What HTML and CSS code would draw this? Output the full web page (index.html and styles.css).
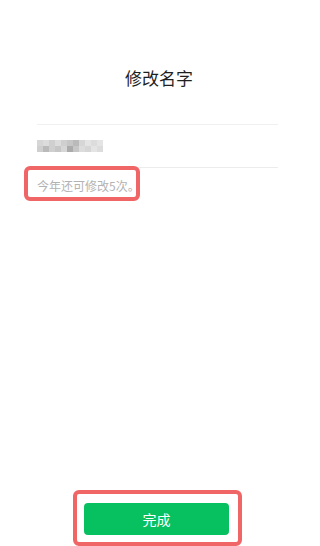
FILE: index.html
```html
<!DOCTYPE html>
<html lang="zh-CN">
<head>
<meta charset="utf-8">
<title>修改名字</title>
<link rel="stylesheet" href="styles.css">
</head>
<body>
<div class="page">
  <h1 class="title">修改名字</h1>
  <div class="field">
    <div class="mosaic" aria-label="名字（已打码）">
      <span class="c2"></span><span class="c1"></span><span class="c3"></span><span class="c1"></span><span class="c3"></span><span class="c4"></span><span class="c5"></span><span class="c2"></span><span class="c0"></span><span class="c1"></span><span class="c0"></span>
      <span class="c3"></span><span class="c5"></span><span class="c3"></span><span class="c4"></span><span class="c2"></span><span class="c6"></span><span class="c4"></span><span class="c1"></span><span class="c2"></span><span class="c0"></span><span class="c1"></span>
    </div>
  </div>
  <div class="hint">
    <span class="hint-text">今年还可修改5次。</span>
    <span class="mark mark-hint"></span>
  </div>
  <div class="footer">
    <button class="done" type="button">完成</button>
    <span class="mark mark-btn"></span>
  </div>
</div>
</body>
</html>
```
FILE: styles.css
```css
html, body {
  margin: 0;
  padding: 0;
  background: #ffffff;
}
body {
  font-family: "Noto Sans CJK SC", "Noto Sans", sans-serif;
}
.page {
  box-sizing: border-box;
  height: 546px;
  padding: 66px 42px 0 37px;
  display: flex;
  flex-direction: column;
}
.title {
  margin: 0 0 0 -37px;
  width: 318px;
  text-align: center;
  font-size: 17px;
  line-height: 24px;
  font-weight: 400;
  color: #1f1f1f;
}
.field {
  margin-top: 34px;
  height: 42px;
  border-top: 1px solid #f0f0f0;
  border-bottom: 1px solid #ececec;
  display: flex;
  align-items: center;
}
.mosaic {
  display: grid;
  grid-template-columns: repeat(11, 6px);
  grid-template-rows: repeat(2, 6px);
  margin-left: 0;
  filter: blur(0.6px);
}
.mosaic span { display: block; }
.c0 { background: #e4e4e4; }
.c1 { background: #dcdcdc; }
.c2 { background: #d6d6d6; }
.c3 { background: #cfcfcf; }
.c4 { background: #c6c6c6; }
.c5 { background: #bababa; }
.c6 { background: #ababab; }
.hint {
  position: relative;
  align-self: flex-start;
  margin-top: 8px;
  line-height: 16px;
  height: 16px;
}
.hint-text {
  font-size: 12px;
  color: #b3b3b3;
  white-space: nowrap;
}
.mark {
  position: absolute;
  box-sizing: border-box;
  border: 4px solid #f06565;
  border-radius: 6px;
  pointer-events: none;
}
.mark-hint {
  left: -13px;
  top: -10px;
  width: 116px;
  height: 35px;
}
.footer {
  position: relative;
  margin-top: auto;
  margin-bottom: 11px;
  margin-left: 47px;
  width: 145px;
  height: 32px;
}
.done {
  display: block;
  width: 145px;
  height: 32px;
  border: 0;
  border-radius: 4px;
  background: #07c160;
  color: #ffffff;
  font-family: "Noto Sans CJK SC", "Noto Sans", sans-serif;
  font-size: 14px;
  line-height: 32px;
  padding: 0;
}
.mark-btn {
  left: -11px;
  top: -13px;
  width: 169px;
  height: 56px;
}
```
